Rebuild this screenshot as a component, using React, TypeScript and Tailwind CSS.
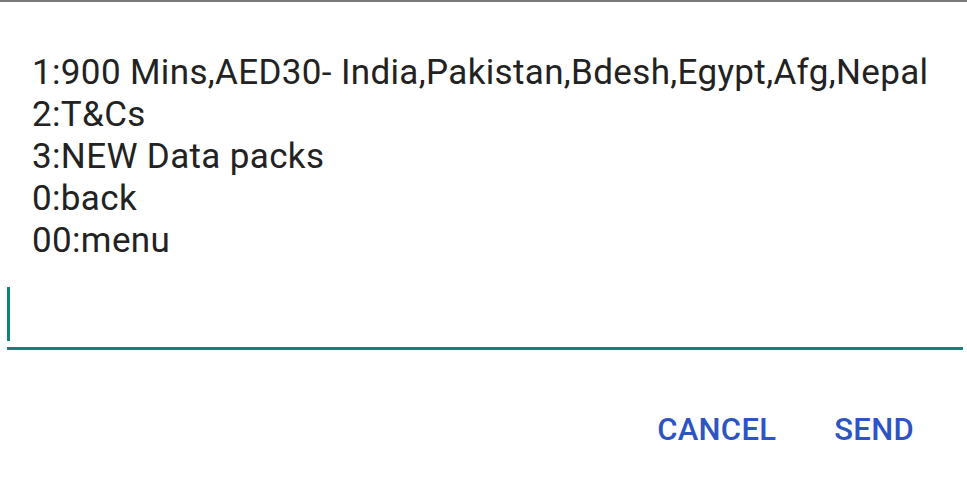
import React from 'react';

const lines = [
  '1:900 Mins,AED30- India,Pakistan,Bdesh,Egypt,Afg,Nepal',
  '2:T&Cs',
  '3:NEW Data packs',
  '0:back',
  '00:menu',
];

const App: React.FC = () => {
  return (
    <div
      className="w-[967px] h-[486px] bg-white border-t-2 border-[#7a7a7a] overflow-hidden"
      style={{ fontFamily: 'Roboto, "Noto Sans", sans-serif' }}
    >
      {/* USSD message */}
      <div className="h-[261px] pt-[50px] pl-[32px] text-[35px] leading-[42px] tracking-[0.35px] text-[#222222] whitespace-nowrap">
        {lines.map((l) => (
          <div key={l}>{l}</div>
        ))}
      </div>

      {/* Reply input */}
      <div className="mt-[24px] ml-[7px] mr-[4px]">
        <div className="h-[54px] flex items-stretch">
          <div className="w-[3px] bg-[#16807a]"></div>
        </div>
        <div className="mt-[6px] h-[3px] bg-[#16807a]"></div>
      </div>

      {/* Actions */}
      <div className="mt-[63px] pr-[53px] flex justify-end gap-[58px] text-[31px] leading-[34px] font-medium text-[#2d55c2] tracking-[0.3px]">
        <button type="button">CANCEL</button>
        <button type="button">SEND</button>
      </div>
    </div>
  );
};

export default App;
